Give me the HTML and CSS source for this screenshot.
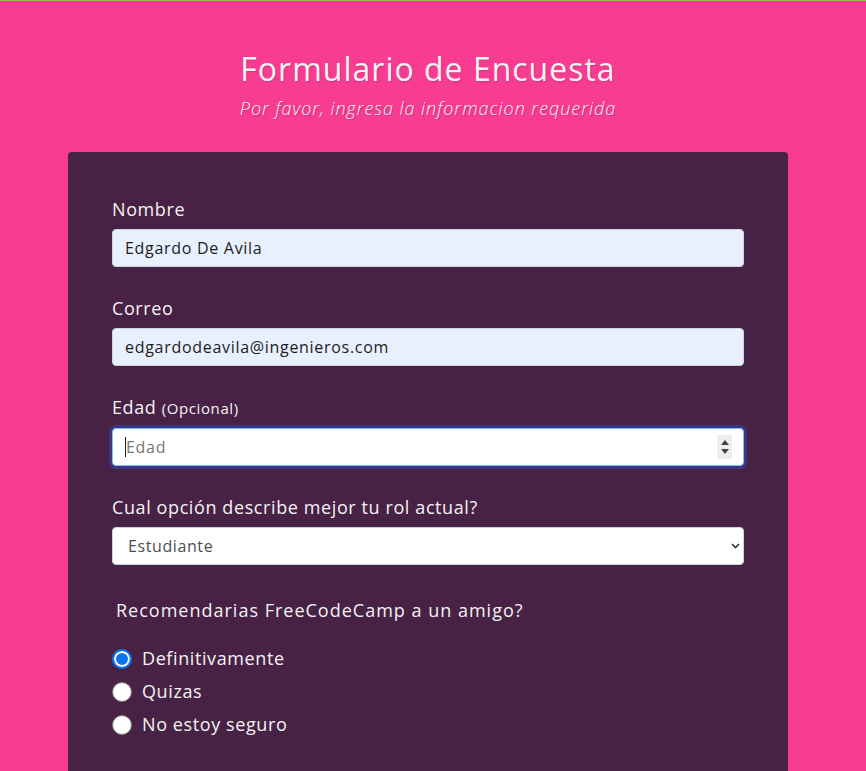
FILE: index.html
```html
<!DOCTYPE html>
<html lang="es">
<head>
<meta charset="utf-8">
<title>Formulario de Encuesta</title>
<link rel="stylesheet" href="styles.css">
</head>
<body>
<div class="topline"></div>
<div class="page">
<header class="header">
  <h1 class="title">Formulario de Encuesta</h1>
  <p class="description">Por favor, ingresa la informacion requerida</p>
</header>
<main class="card">
  <form class="survey">
    <div class="group">
      <label class="label" for="name">Nombre</label>
      <input class="control autofill" id="name" type="text" value="Edgardo De Avila">
    </div>
    <div class="group">
      <label class="label" for="email">Correo</label>
      <input class="control autofill" id="email" type="email" value="edgardodeavila@ingenieros.com">
    </div>
    <div class="group">
      <label class="label" for="age">Edad <span class="clue">(Opcional)</span></label>
      <div class="control focused">
        <span class="caret"></span><span class="placeholder">Edad</span>
        <span class="spinner">
          <svg width="8" height="5" viewBox="0 0 8 5"><path d="M0 5 L4 0 L8 5Z" fill="#444"/></svg>
          <svg width="8" height="5" viewBox="0 0 8 5"><path d="M0 0 L4 5 L8 0Z" fill="#444"/></svg>
        </span>
      </div>
    </div>
    <div class="group">
      <label class="label" for="role">Cual opción describe mejor tu rol actual?</label>
      <div class="control select" id="role">
        <span>Estudiante</span>
        <svg class="chevron" width="9" height="6" viewBox="0 0 9 6"><path d="M1 1 L4.5 4.5 L8 1" fill="none" stroke="#333" stroke-width="1.6"/></svg>
      </div>
    </div>
    <div class="group">
      <p class="question">Recomendarias FreeCodeCamp a un amigo?</p>
      <label class="radio"><span class="dot checked"></span>Definitivamente</label>
      <label class="radio"><span class="dot"></span>Quizas</label>
      <label class="radio"><span class="dot"></span>No estoy seguro</label>
    </div>
  </form>
</main>
</div>
</body>
</html>
```
FILE: styles.css
```css
html, body {
  margin: 0;
  padding: 0;
}
body {
  background: #f83c92;
  font-family: "Open Sans", "Noto Sans", sans-serif;
  color: #f3f3f3;
  height: 771px;
  overflow: hidden;
}
.topline {
  height: 1px;
  background: #a7b94a;
}
.page {
  width: 856px;
}
.header {
  text-align: center;
  padding-top: 46px;
}
.title {
  margin: 0;
  font-size: 32px;
  font-weight: 400;
  letter-spacing: 1px;
  line-height: 44px;
  text-shadow: 1px 1px 1px rgba(0,0,0,0.15);
}
.description {
  margin: 4px 0 0;
  font-size: 18px;
  font-style: italic;
  font-weight: 300;
  letter-spacing: 0.95px;
  line-height: 26px;
  text-shadow: 1px 1px 1px rgba(0,0,0,0.2);
}
.card {
  width: 632px;
  margin: 31px auto 0;
  background: #482244;
  border-radius: 4px 4px 0 0;
  padding: 44px 44px 40px;
}
.survey {
  display: flex;
  flex-direction: column;
}
.group {
  margin-bottom: 28px;
}
.label {
  display: block;
  font-size: 18px;
  font-weight: 500;
  letter-spacing: 0.6px;
  line-height: 27px;
  margin-bottom: 6px;
}
.clue {
  font-size: 15px;
  font-weight: 400;
  letter-spacing: 0.6px;
}
.control {
  box-sizing: border-box;
  display: flex;
  align-items: center;
  width: 100%;
  height: 38px;
  padding: 0 12px;
  border: 1px solid #ced4da;
  border-radius: 4px;
  background: #fff;
  color: #222;
  font-family: inherit;
  font-size: 16px;
  letter-spacing: 0.7px;
}
.autofill {
  background: #e8f0fe;
  color: #1c1c1c;
}
.focused {
  border-color: #80bdff;
  box-shadow: 0 0 0 3px #3a3683;
}
.caret {
  width: 1px;
  height: 20px;
  background: #222;
}
.placeholder {
  color: #777;
  flex: 1;
}
.spinner {
  display: flex;
  flex-direction: column;
  justify-content: center;
  align-items: center;
  gap: 4px;
  width: 15px;
  height: 24px;
  background: #eee;
  margin-right: -1px;
}
.select {
  justify-content: space-between;
  color: #4d4d4d;
  padding-left: 15px;
  letter-spacing: 0.6px;
}
.chevron {
  margin-right: -9px;
}
.question {
  margin: 4px 0 0 4px;
  font-size: 18px;
  line-height: 27px;
  font-weight: 400;
  letter-spacing: 1px;
}
.radio {
  display: flex;
  align-items: center;
  font-size: 18px;
  line-height: 33px;
  font-weight: 400;
  letter-spacing: 0.6px;
}
.radio:first-of-type {
  margin-top: 18px;
}
.dot {
  box-sizing: border-box;
  width: 20px;
  height: 20px;
  border-radius: 50%;
  background: #fff;
  border: 1px solid #767676;
  margin-right: 10px;
}
.dot.checked {
  border: 2px solid #0a74f0;
  box-shadow: inset 0 0 0 2px #fff;
  background: #0a74f0;
}
```
